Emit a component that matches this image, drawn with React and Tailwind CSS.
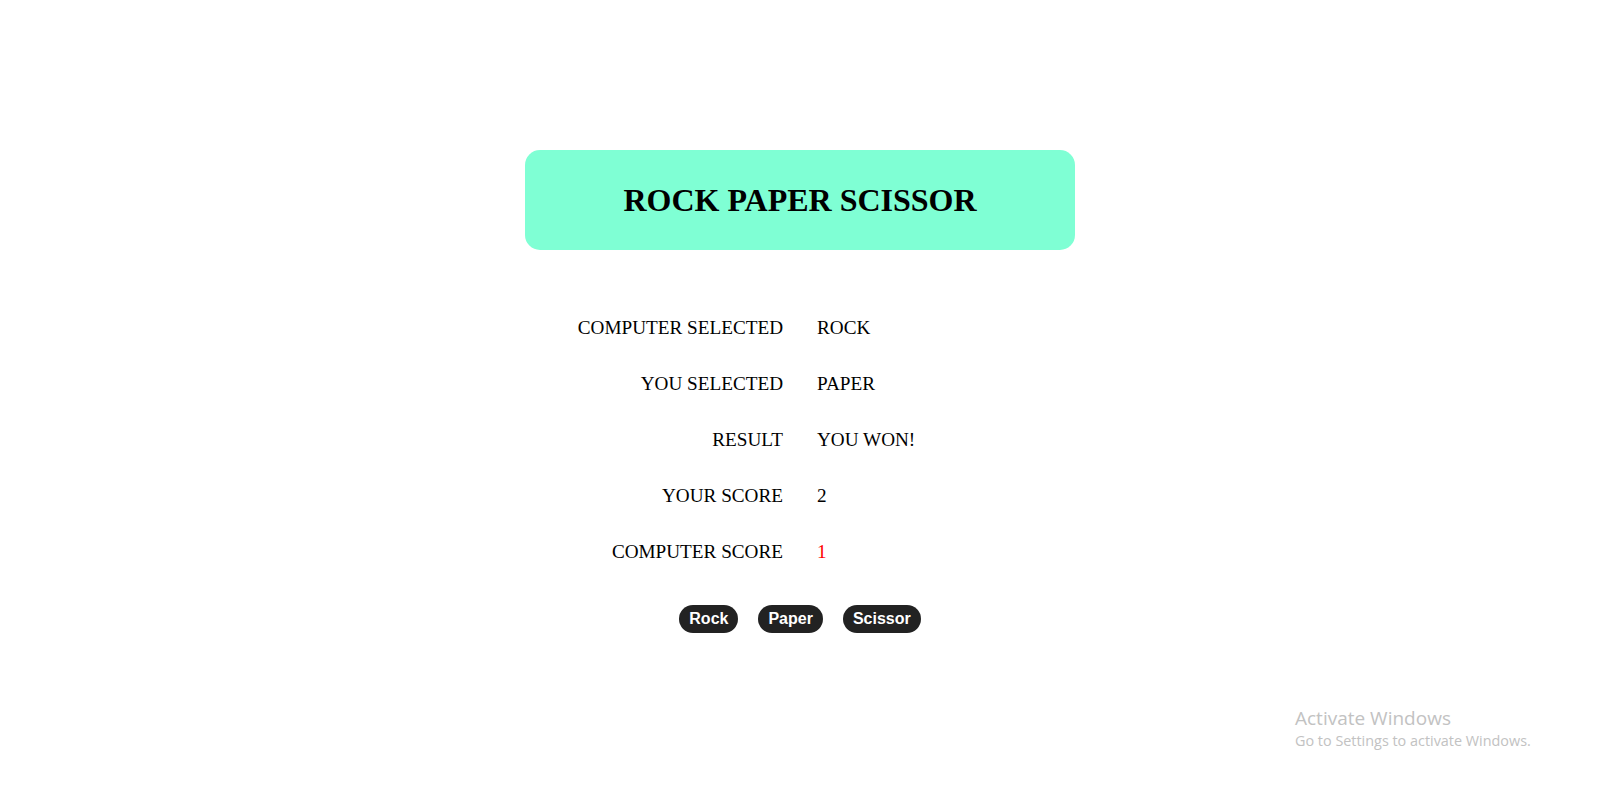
import React from "react";

const rows = [
  { label: "COMPUTER SELECTED", value: "ROCK" },
  { label: "YOU SELECTED", value: "PAPER" },
  { label: "RESULT", value: "YOU WON!" },
  { label: "YOUR SCORE", value: "2" },
  { label: "COMPUTER SCORE", value: "1", red: true },
];

export default function App() {
  return (
    <div className="relative min-h-[790px] w-full bg-white font-['Liberation_Serif',serif] text-black">
      <div className="flex flex-col items-center pt-[150px]">
        {/* header */}
        <div className="flex h-[100px] w-[550px] items-center justify-center rounded-[15px] bg-[#7fffd4]">
          <h1 className="text-[32px] font-bold leading-none">ROCK PAPER SCISSOR</h1>
        </div>

        {/* stats */}
        <div className="mt-[50px] grid w-[600px] grid-cols-2 gap-x-[34px]">
          {rows.map((r) => (
            <React.Fragment key={r.label}>
              <div className="flex h-[56px] items-center justify-end text-[19.2px]">{r.label}</div>
              <div className={`flex h-[56px] items-center text-[19.2px] ${r.red ? "text-[#ff0000]" : ""}`}>
                {r.value}
              </div>
            </React.Fragment>
          ))}
        </div>

        {/* buttons */}
        <div className="mt-[25px] flex gap-[20px] font-['Liberation_Sans',sans-serif]">
          {["Rock", "Paper", "Scissor"].map((b) => (
            <button
              key={b}
              className="flex h-[28px] items-center rounded-full bg-[#222222] px-[10px] text-[16px] font-bold text-white"
            >
              {b}
            </button>
          ))}
        </div>
      </div>

      {/* windows watermark */}
      <div className="absolute left-[1295px] top-[705px] font-['Open_Sans',sans-serif] text-[#c2c2c2]">
        <div className="text-[19px] leading-[26px]">Activate Windows</div>
        <div className="text-[14.4px] leading-[20px]">Go to Settings to activate Windows.</div>
      </div>
    </div>
  );
}
